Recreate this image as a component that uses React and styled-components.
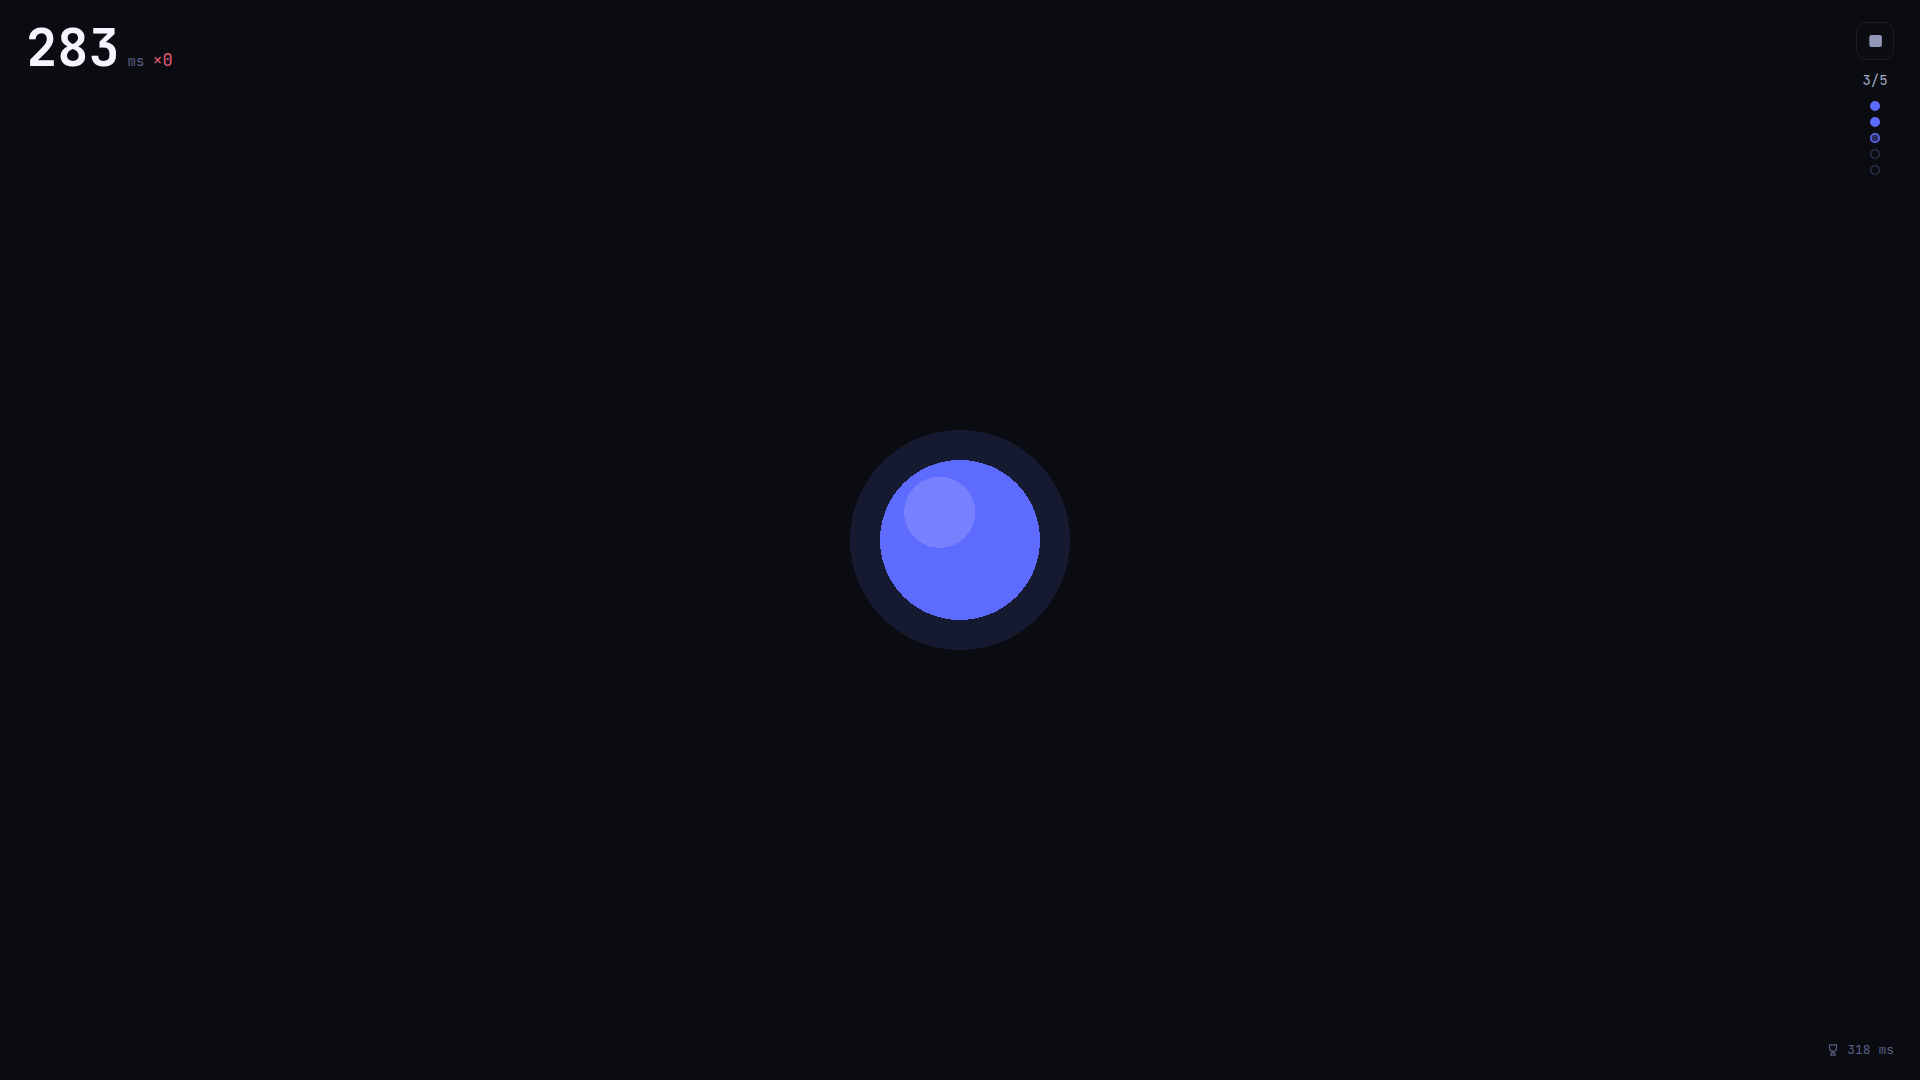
import React from "react";
import styled, { createGlobalStyle } from "styled-components";

const GlobalStyle = createGlobalStyle`
  * {
    box-sizing: border-box;
  }
  body {
    margin: 0;
    background: #0b0c11;
    color: #f4f5ff;
    font-family: "JetBrains Mono", "DejaVu Sans Mono", monospace;
  }
`;

const Arena = styled.main`
  position: relative;
  display: grid;
  place-items: center;
  min-height: 100vh;
  overflow: hidden;
`;

const TargetButton = styled.button`
  display: block;
  padding: 0;
  border: none;
  border-radius: 50%;
  background: none;
  cursor: pointer;
`;

const TargetArt = styled.svg`
  display: block;
  width: 220px;
  height: 220px;
  shape-rendering: crispEdges;
`;

const Score = styled.div`
  position: absolute;
  top: 22px;
  left: 26px;
  display: flex;
  align-items: baseline;
  gap: 8px;
`;

const Time = styled.span`
  font-size: 52px;
  font-weight: 700;
  line-height: 52px;
`;

const Unit = styled.span`
  font-size: 14px;
  color: #5a5e82;
`;

const Misses = styled.span`
  font-size: 17px;
  color: #e35a74;
`;

const Side = styled.aside`
  position: absolute;
  top: 22px;
  right: 26px;
  display: flex;
  flex-direction: column;
  align-items: center;
  gap: 12px;
`;

const StopButton = styled.button`
  display: grid;
  place-items: center;
  width: 38px;
  height: 38px;
  padding: 0;
  border: 1px solid #1c1d27;
  border-radius: 10px;
  background: #0c0d12;
  color: #9297ba;
  cursor: pointer;
`;

const Round = styled.span`
  font-size: 14px;
  line-height: 17px;
  color: #a3a8c6;
`;

const Dots = styled.ol`
  display: flex;
  flex-direction: column;
  gap: 6px;
  margin: 0;
  padding: 0;
  list-style: none;
`;

const Dot = styled.li`
  height: 10px;
  color: ${(props) => (props.$state === "next" ? "#2c2e48" : "#5e6bff")};

  svg {
    display: block;
  }
`;

const Best = styled.div`
  position: absolute;
  right: 26px;
  bottom: 22px;
  display: flex;
  align-items: center;
  gap: 8px;
  font-size: 13px;
  line-height: 16px;
  color: #5a5e82;
`;

const fills = { done: "#5e6bff", current: "#2b2f5c", next: "none" };

const CupIcon = () => (
  <svg
    width="12"
    height="12"
    viewBox="0 0 12 12"
    fill="none"
    stroke="currentColor"
    strokeWidth="1.2"
    strokeLinejoin="round"
    strokeLinecap="round"
    aria-hidden="true"
  >
    <path d="M2.5 .8h7v3.2a3.5 3.3 0 0 1-7 0z" />
    <path d="M6 7.3v1.3M3.8 11.2c0-1.5.8-2.5 2.2-2.5s2.2 1 2.2 2.5z" />
  </svg>
);

const rounds = ["done", "done", "current", "next", "next"];

const App = () => {
  return (
    <>
      <GlobalStyle />
      <Arena>
        <Score>
          <Time>283</Time>
          <Unit>ms</Unit>
          <Misses>×0</Misses>
        </Score>

        <TargetButton aria-label="Target">
          <TargetArt viewBox="0 0 220 220">
            <circle cx="110" cy="110" r="110" fill="#161a30" />
            <circle cx="110" cy="110" r="80" fill="#5e6bff" />
            <circle cx="89.7" cy="82.3" r="35.6" fill="#7780ff" />
          </TargetArt>
        </TargetButton>

        <Side>
          <StopButton aria-label="Stop">
            <svg width="14" height="14" viewBox="0 0 14 14" aria-hidden="true">
              <rect x="1.3" y=".9" width="12.6" height="12.2" rx="2" fill="currentColor" />
            </svg>
          </StopButton>
          <Round>3/5</Round>
          <Dots>
            {rounds.map((state, i) => (
              <Dot key={i} $state={state}>
                <svg width="10" height="10" viewBox="0 0 10 10" aria-hidden="true">
                  <circle
                    cx="5"
                    cy="5"
                    r="4.25"
                    fill={fills[state]}
                    stroke="currentColor"
                    strokeWidth="1.5"
                  />
                </svg>
              </Dot>
            ))}
          </Dots>
        </Side>

        <Best>
          <CupIcon />
          <span>318 ms</span>
        </Best>
      </Arena>
    </>
  );
};

export default App;
